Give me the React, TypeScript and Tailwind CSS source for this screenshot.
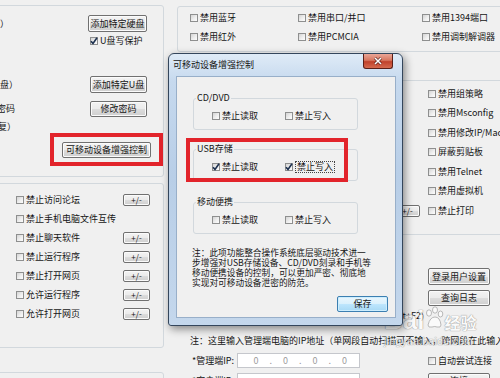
import React from "react";

function Box({ checked = false }: { checked?: boolean }) {
  return (
    <span className="flex h-[8px] w-[8px] shrink-0 items-center justify-center border border-[#8e8f8f] bg-[linear-gradient(135deg,#d4d4d4,#eeeeee_55%,#fdfdfd)]">
      {checked && (
        <svg viewBox="0 0 8 8" className="h-[8px] w-[8px] shrink-0 overflow-visible">
          <path d="M1 4.2 L3 6.4 L7 0.8" fill="none" stroke="#1d3150" strokeWidth="1.6" />
        </svg>
      )}
    </span>
  );
}

function Check({
  label,
  checked = false,
  focus = false,
}: {
  label: string;
  checked?: boolean;
  focus?: boolean;
}) {
  return (
    <span className="flex items-center gap-[2px] whitespace-nowrap">
      <Box checked={checked} />
      <span className={focus ? "border border-dotted border-[#444] px-[1px] leading-[10px]" : ""}>{label}</span>
    </span>
  );
}

function Btn({ children, className = "" }: { children?: React.ReactNode; className?: string }) {
  return (
    <div
      className={
        "flex shrink-0 items-center justify-center whitespace-nowrap rounded-[2px] border border-[#707070] bg-[linear-gradient(#f3f3f3,#ebebeb_50%,#dddddd_50%,#cfcfcf)] shadow-[inset_0_0_0_1px_#fbfbfb] " +
        className
      }
    >
      {children}
    </div>
  );
}

function IpBox({ digits = true }: { digits?: boolean }) {
  return (
    <div className="flex h-[15px] w-[123px] shrink-0 items-center border border-[#c5c7cc] bg-white pl-[12px] text-[#9c9c9c]">
      {digits &&
        [0, 1, 2, 3].map((i) => (
          <React.Fragment key={i}>
            <span className="w-[12px] text-center">0</span>
            {i < 3 && <span className="w-[17.5px] text-center">.</span>}
          </React.Fragment>
        ))}
    </div>
  );
}

export default function App() {
  const leftRows: [string, boolean][] = [
    ["禁止访问论坛", true],
    ["禁止手机电脑文件互传", false],
    ["禁止聊天软件", true],
    ["禁止运行程序", true],
    ["禁止打开网页", true],
    ["允许运行程序", true],
    ["允许打开网页", true],
  ];
  const rightRows = ["禁用组策略", "禁用Msconfig", "禁用修改IP/Mac", "屏蔽剪贴板", "禁用Telnet", "禁用虚拟机"];

  return (
    <div className="relative flex h-[378px] w-[500px] overflow-hidden bg-[#f0f0f0] font-['Noto_Sans_CJK_SC',sans-serif] text-[9px] leading-[12px] text-[#151515]">
      {/* left column */}
      <div className="flex w-[165px] shrink-0 flex-col pt-[5px]">
        {/* group A */}
        <div className="-ml-[4px] flex h-[172px] w-[168px] shrink-0 flex-col rounded-[3px] border border-[#d2d8dd] pl-[3px]">
          <div className="mt-[9px] flex h-[17px] items-center">
            <span className="w-[88px]">）</span>
            <Btn className="h-[17px] w-[59px]">添加特定硬盘</Btn>
          </div>
          <div className="mt-[2px] flex h-[14px] items-center pl-[90px]">
            <Check label="U盘写保护" checked />
          </div>
          <div className="mt-[28px] flex h-[17px] items-center">
            <span className="w-[90px]">盘）</span>
            <Btn className="h-[17px] w-[57px]">添加特定U盘</Btn>
          </div>
          <div className="mt-[8px] flex h-[16px] items-center">
            <span className="w-[90px] overflow-hidden">
              <span className="-ml-[3px] block">密码</span>
            </span>
            <Btn className="h-[16px] w-[57px]">修改密码</Btn>
          </div>
          <div className="mt-[4px] flex h-[12px] items-center overflow-hidden">
            <span className="-ml-[2px]">复）</span>
          </div>
          <div className="ml-[50px] flex h-[33px] w-[113px] items-center justify-center border-[4px] border-[#e2242b]">
            <Btn className="h-[16px] w-[89px]">可移动设备增强控制</Btn>
          </div>
        </div>

        {/* group B */}
        <div className="-ml-[4px] mt-[6px] flex h-[165px] w-[168px] shrink-0 flex-col rounded-[3px] border border-[#d2d8dd] pl-[3px] pt-[6px]">
          {leftRows.map(([label, btn]) => (
            <div key={label} className="flex h-[19px] items-center">
              <span className="w-[123px] pl-[16px]">
                <Check label={label} />
              </span>
              {btn && <Btn className="h-[12px] w-[27px] text-[8px]">+/-</Btn>}
            </div>
          ))}
        </div>

        {/* group C */}
        <div className="-ml-[4px] mt-[24px] h-[30px] w-[168px] shrink-0 rounded-[3px] border border-[#d2d8dd]" />
      </div>

      {/* right column */}
      <div className="flex w-[335px] shrink-0 flex-col pl-[12px]">
        {/* group 1 */}
        <div className="mt-[6px] flex h-[46px] w-[330px] shrink-0 flex-col rounded-[3px] border border-[#d2d8dd] pt-[1px]">
          <div className="flex h-[19px] items-center pl-[12px]">
            <span className="w-[108px]">
              <Check label="禁用蓝牙" />
            </span>
            <span className="w-[124px]">
              <Check label="禁用串口/并口" />
            </span>
            <Check label="禁用1394端口" />
          </div>
          <div className="flex h-[19px] items-center pl-[12px]">
            <span className="w-[108px]">
              <Check label="禁用红外" />
            </span>
            <span className="w-[124px]">
              <Check label="禁用PCMCIA" />
            </span>
            <Check label="禁用调制解调器" />
          </div>
        </div>

        {/* group 2 */}
        <div className="mt-[28px] flex h-[155px] w-[330px] shrink-0 flex-col rounded-[3px] border border-[#d2d8dd] pt-[3px]">
          {rightRows.map((r) => (
            <div key={r} className="flex h-[19.5px] items-center pl-[250px]">
              <Check label={r} />
            </div>
          ))}
          <div className="flex h-[19.5px] items-center pl-[217px]">
            <Btn className="h-[12px] w-[25px] text-[8px]">+/-</Btn>
            <span className="ml-[8px]">
              <Check label="禁止打印" />
            </span>
          </div>
        </div>

        {/* group 3 */}
        <div className="flex flex-col">
          <div className="mt-[33px] pl-[251px]">
            <Btn className="h-[17px] w-[62px]">登录用户设置</Btn>
          </div>
          <div className="mt-[5px] pl-[251px]">
            <Btn className="h-[16px] w-[62px]">查询日志</Btn>
          </div>
          <div className="mt-[5px] flex h-[10px] w-[247px] items-center justify-end whitespace-nowrap leading-[10px]">
            （呼出快捷键Ctrl+Alt+F2)
          </div>
          <div className="mt-[14px] flex h-[12px] items-center whitespace-nowrap pl-[13px]">
            注：这里输入管理端电脑的IP地址（单网段自动扫描可不输入，跨网段在此输入）
          </div>
          <div className="mt-[6px] flex h-[15px] items-center">
            <span className="w-[60px] whitespace-nowrap pl-[15px]">*管理端IP:</span>
            <IpBox />
            <span className="ml-[68px]">
              <Check label="自动尝试连接" />
            </span>
          </div>
          <div className="mt-[5px] flex h-[15px] items-center">
            <span className="w-[60px] whitespace-nowrap pl-[15px]">*客户端IP:</span>
            <IpBox digits={false} />
            <Btn className="ml-[68px] h-[16px] w-[62px]">连接</Btn>
          </div>
        </div>
      </div>

      {/* baidu watermark */}
      <div className="pointer-events-none absolute left-[384px] top-[306px] flex flex-col text-white opacity-70 [text-shadow:0_0_1px_#707070,0_0_1px_#707070]">
        <div className="flex items-end">
          <span className="font-['Liberation_Sans',sans-serif] text-[26px] font-bold leading-[28px]">Bai</span>
          <svg viewBox="0 0 20 24" className="mb-[4px] h-[24px] w-[20px]">
            <g fill="white" stroke="#8a8a8a" strokeWidth="0.8">
              <ellipse cx="5" cy="7" rx="2.5" ry="3.2" />
              <ellipse cx="11" cy="4" rx="2.5" ry="3.2" />
              <ellipse cx="16.5" cy="8" rx="2.3" ry="3" />
              <path d="M4 19 Q6 11 11 11 Q16 11 17 19 Q17 22 13 21 Q11 20 8 21 Q4 22 4 19Z" />
            </g>
          </svg>
          <span className="mb-[3px] text-[16px] font-bold leading-[18px]">经验</span>
        </div>
        <span className="mt-[2px] font-['Liberation_Sans',sans-serif] text-[10px] leading-[12px] tracking-[0.5px]">jingyan.baidu.com</span>
      </div>

      {/* dialog */}
      <div className="absolute left-[168px] top-[53px] flex h-[273px] w-[235px] flex-col rounded-b-[3px] rounded-t-[6px] border border-[#34465c] bg-[linear-gradient(180deg,#dfebf7,#c6d9ee_10%,#b8cee7_45%,#c4d7ec)] shadow-[2px_3px_8px_rgba(0,0,0,0.45)]">
        <div className="flex h-[22px] shrink-0 items-start">
          <span className="mt-[5px] pl-[4px] leading-[12px]">可移动设备增强控制</span>
          <div className="ml-auto mr-[9px] flex h-[15px] w-[30px] items-center justify-center rounded-b-[3px] border border-t-0 border-[#5a1f18] bg-[linear-gradient(#eaa697,#d7765f_45%,#c0412b_55%,#d56a4f)]">
            <svg viewBox="0 0 10 8" className="h-[8px] w-[10px]">
              <path d="M2 1 L8 7 M8 1 L2 7" stroke="#4a1510" strokeWidth="2.6" />
              <path d="M2 1 L8 7 M8 1 L2 7" stroke="#ffffff" strokeWidth="1.6" />
            </svg>
          </div>
        </div>
        <div className="relative ml-[7px] flex h-[242px] w-[220px] shrink-0 flex-col border border-[#98afc9] bg-[#f0f0f0]">
          <fieldset className="ml-[16px] mt-[15px] h-[38px] w-[165px] shrink-0 rounded-[3px] border border-[#d2d8dd]">
            <legend className="ml-[2px] px-[1px] leading-[12px]">CD/DVD</legend>
            <div className="mt-[6px] flex h-[12px] items-center pl-[18px]">
              <span className="w-[73px]">
                <Check label="禁止读取" />
              </span>
              <Check label="禁止写入" />
            </div>
          </fieldset>
          <fieldset className="ml-[16px] mt-[13px] h-[38px] w-[165px] shrink-0 rounded-[3px] border border-[#d2d8dd]">
            <legend className="ml-[2px] px-[1px] leading-[12px]">USB存储</legend>
            <div className="mt-[6px] flex h-[12px] items-center pl-[18px]">
              <span className="w-[73px]">
                <Check label="禁止读取" checked />
              </span>
              <Check label="禁止写入" checked focus />
            </div>
          </fieldset>
          <fieldset className="ml-[16px] mt-[15px] h-[38px] w-[165px] shrink-0 rounded-[3px] border border-[#d2d8dd]">
            <legend className="ml-[2px] px-[1px] leading-[12px]">移动便携</legend>
            <div className="mt-[6px] flex h-[12px] items-center pl-[18px]">
              <span className="w-[73px]">
                <Check label="禁止读取" />
              </span>
              <Check label="禁止写入" />
            </div>
          </fieldset>
          <div className="mt-[14px] whitespace-nowrap pl-[15px] text-[8.7px] leading-[10px]">
            <div>注：此项功能整合操作系统底层驱动技术进一</div>
            <div>步增强对USB存储设备、CD/DVD刻录和手机等</div>
            <div>移动便携设备的控制，可以更加严密、彻底地</div>
            <div>实现对可移动设备泄密的防范。</div>
          </div>
          <div className="ml-[160px] mt-[8px] flex h-[16px] w-[51px] items-center justify-center rounded-[2px] border border-[#3c7fb1] bg-[linear-gradient(#eaf6fd,#d9f0fc_50%,#bee6fd_50%,#a7d9f5)] shadow-[inset_0_0_0_1px_#cdeefe]">
            保存
          </div>
          {/* red annotation */}
          <div className="pointer-events-none absolute left-[9px] top-[61px] h-[44px] w-[162px] border-[4px] border-[#e2242b]" />
        </div>
      </div>
    </div>
  );
}
